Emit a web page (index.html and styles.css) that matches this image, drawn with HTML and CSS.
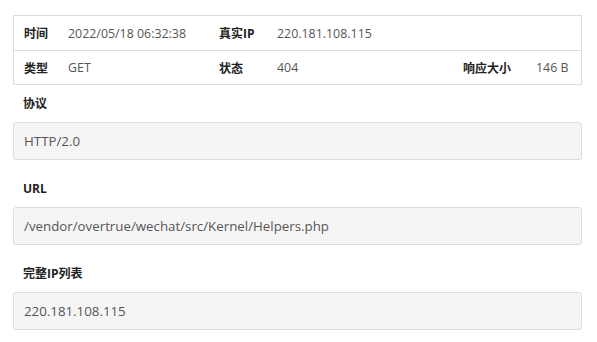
FILE: index.html
```html
<!DOCTYPE html>
<html lang="en">
  <head>
    <meta charset="UTF-8" />
    <meta name="viewport" content="width=device-width, initial-scale=1.0" />
    <title>请求详情</title>
    <link rel="stylesheet" href="styles.css">
  </head>
  <body>
    <div class="detail">
      <table class="info-table">
        <tr class="first">
          <th class="c1">时间</th>
          <td class="c2">2022/05/18 06:32:38</td>
          <th class="c3">真实IP</th>
          <td colspan="3">220.181.108.115</td>
        </tr>
        <tr>
          <th class="c1">类型</th>
          <td class="c2">GET</td>
          <th class="c3">状态</th>
          <td class="c4">404</td>
          <th class="c5">响应大小</th>
          <td>146 B</td>
        </tr>
      </table>

      <div class="field">
        <div class="field-label">协议</div>
        <div class="field-box">HTTP/2.0</div>
      </div>
      <div class="field">
        <div class="field-label">URL</div>
        <div class="field-box">/vendor/overtrue/wechat/src/Kernel/Helpers.php</div>
      </div>
      <div class="field">
        <div class="field-label">完整IP列表</div>
        <div class="field-box">220.181.108.115</div>
      </div>
    </div>
  </body>
</html>
```

FILE: styles.css
```css
body {
  margin: 0;
  font-family: "Open Sans", "Noto Sans CJK SC", sans-serif;
  color: #333;
  background: #fff;
}
.detail {
  margin: 15px 15px 0 13px;
}
.info-table {
  width: 100%;
  border-collapse: collapse;
  border: 1px solid #ddd;
  font-size: 12.4px;
}
.info-table tr {
  border-bottom: 1px solid #ddd;
}
.info-table th,
.info-table td {
  height: 34px;
  padding: 0 10px;
  text-align: left;
  white-space: nowrap;
  box-sizing: border-box;
}
.info-table .first th,
.info-table .first td {
  height: 35px;
}
.info-table th {
  font-weight: bold;
  font-size: 12px;
  color: #222;
}
.info-table td {
  color: #555;
}
.c1 {
  width: 44px;
}
.c2 {
  width: 151px;
}
.c3 {
  width: 58px;
}
.c4 {
  width: 186px;
}
.c5 {
  width: 73px;
}
.field {
  margin-bottom: 20px;
}
.info-table + .field {
  margin-top: 10px;
}
.field-label {
  font-size: 12px;
  line-height: 17px;
  font-weight: bold;
  color: #222;
  padding-left: 10px;
  margin-bottom: 10px;
}
.field-box {
  height: 38px;
  box-sizing: border-box;
  border: 1px solid #ddd;
  border-radius: 3px;
  background: #f5f5f5;
  padding: 0 10px;
  font-size: 13.3px;
  line-height: 36px;
  color: #555;
}
```
